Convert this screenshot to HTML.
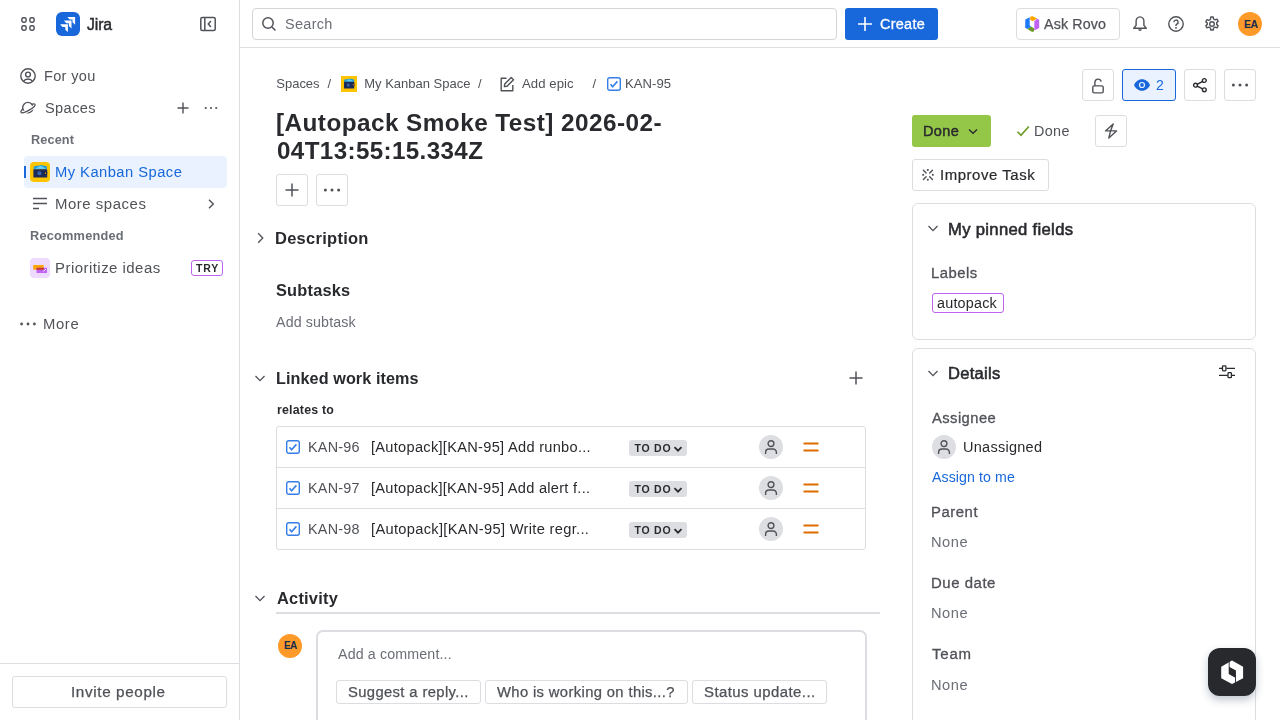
<!DOCTYPE html>
<html><head><meta charset="utf-8">
<style>
*{box-sizing:border-box;margin:0;padding:0}
html,body{width:1280px;height:720px;overflow:hidden;background:#fff}
body{-webkit-font-smoothing:antialiased;font-family:"Liberation Sans",sans-serif;color:#292a2e;font-size:14px;position:relative}
.a{position:absolute}
.t{position:absolute;white-space:nowrap;line-height:1;transform-origin:0 0}
svg{display:block;position:absolute;overflow:visible}
.b{position:absolute;border:1px solid #dcdde0;border-radius:3px;background:#fff}
</style></head><body>
<!-- SIDEBAR -->
<div class="a" style="left:239px;top:0;width:1px;height:720px;background:#dddee1"></div>
<svg style="left:20px;top:16px" width="16" height="16" viewBox="0 0 16 16"><g fill="none" stroke="#505258" stroke-width="1.5"><rect x="1.85" y="1.85" width="4.3" height="4.3" rx="1.6"/><rect x="9.85" y="1.85" width="4.3" height="4.3" rx="1.6"/><rect x="1.85" y="9.85" width="4.3" height="4.3" rx="1.6"/><rect x="9.85" y="9.85" width="4.3" height="4.3" rx="1.6"/></g></svg>
<div class="a" style="left:56px;top:12px;width:24px;height:24px;border-radius:6px;background:#1868db"></div>
<svg style="left:56px;top:12px" width="24" height="24" viewBox="0 0 24 24"><g fill="#fff"><path d="M11.3 4.9H19.1V12.7L16.5 10.3V7.5H13.7Z"/><path d="M7.9 8.6H15.5V16.4L12.9 14V11.2H10.3Z"/><path d="M4.1 12.3H11.9V20.1L9.3 17.7V14.9H6.5Z"/></g></svg>
<svg style="left:200px;top:16px" width="16" height="16" viewBox="0 0 16 16"><g fill="none" stroke="#505258" stroke-width="1.5"><rect x="0.8" y="1.5" width="14.4" height="13" rx="1.5"/><path d="M4.8 2v12"/><path d="M10.9 5.1 8.3 8l2.6 2.9"/></g></svg>

<svg style="left:20px;top:68px" width="16" height="16" viewBox="0 0 16 16"><g fill="none" stroke="#505258" stroke-width="1.4"><circle cx="8" cy="8" r="7.2"/><circle cx="8" cy="6.5" r="2.4"/><path d="M3.6 13.2c1-1.6 2.6-2.2 4.4-2.2s3.4.6 4.4 2.2"/></g></svg>
<svg style="left:20px;top:100px" width="16" height="16" viewBox="0 0 16 16"><g fill="none" stroke-width="1.4"><ellipse cx="8" cy="8.3" rx="8" ry="2.2" transform="rotate(-29 8 8.3)" stroke="#505258"/><circle cx="7.9" cy="7.6" r="5.2" fill="#fff" stroke="#505258"/><g transform="rotate(-29 8 8.3)"><path d="M0 8.3A8 2.2 0 0 0 16 8.3" stroke="#fff" stroke-width="3.2"/><path d="M0 8.3A8 2.2 0 0 0 16 8.3" stroke="#505258"/></g></g></svg>
<svg style="left:175px;top:100px" width="16" height="16" viewBox="0 0 16 16"><path d="M8 2.5v11M2.5 8h11" stroke="#505258" stroke-width="1.4"/></svg>
<svg style="left:203px;top:100px" width="16" height="16" viewBox="0 0 16 16"><g fill="#505258"><circle cx="2.8" cy="8" r="1.1"/><circle cx="8" cy="8" r="1.1"/><circle cx="13.2" cy="8" r="1.1"/></g></svg>

<div class="a" style="left:24px;top:156px;width:203px;height:32px;border-radius:4px;background:#e9f2fe"></div>
<div class="a" style="left:24px;top:166px;width:2px;height:12px;background:#1868db"></div>
<div class="a" style="left:30px;top:162px;width:20px;height:20px;border-radius:4px;background:#ffc400"></div>
<svg style="left:30px;top:162px" width="20" height="20" viewBox="0 0 20 20"><path d="M3.6 7.3 4 4.2 9.5 3.6 10.8 3 16.8 4.2 16.9 7.3z" fill="#1d9fd8"/><path d="M5 6.8 10.5 3.8 14 5.6 16 7z" fill="#6cd0f0"/><rect x="3.4" y="7.2" width="13.8" height="8.4" rx=".6" fill="#1c2b5a"/><rect x="13.3" y="9.4" width="3.9" height="3.7" rx=".8" fill="#14224a"/><circle cx="15.5" cy="11.3" r=".75" fill="#f5a623"/><circle cx="9.4" cy="11.2" r="2" fill="#3a67b0"/></svg>

<svg style="left:32px;top:196px" width="16" height="16" viewBox="0 0 16 16"><g stroke="#505258" stroke-width="1.4"><path d="M1 2.5h14M1 7.5h14M1 12.5h6"/></g></svg>
<svg style="left:203px;top:196px" width="16" height="16" viewBox="0 0 16 16"><path d="M6 3.8 10.3 8 6 12.2" fill="none" stroke="#505258" stroke-width="1.4"/></svg>

<div class="a" style="left:30px;top:258px;width:20px;height:20px;border-radius:4px;background:#eedafc"></div>
<svg style="left:30px;top:258px" width="20" height="20" viewBox="0 0 20 20"><rect x="3.2" y="6.9" width="10.5" height="4.9" rx=".5" fill="#fca700"/><rect x="6.5" y="9.8" width="10.5" height="5.1" rx=".5" fill="#bf63f3"/><rect x="6.5" y="9.8" width="7.2" height="2" fill="#c9372c"/><path d="M13.4 13.2 14.3 12.7 16 11" stroke="#fff" stroke-width=".9" fill="none"/></svg>
<div class="a" style="left:191px;top:260px;width:32px;height:16px;border:1px solid #bf63f3;border-radius:3px"></div>

<svg style="left:20px;top:316px" width="16" height="16" viewBox="0 0 16 16"><g fill="#505258"><circle cx="1.6" cy="8" r="1.4"/><circle cx="8" cy="8" r="1.4"/><circle cx="14.4" cy="8" r="1.4"/></g></svg>

<div class="a" style="left:0;top:663px;width:239px;height:1px;background:#dddee1"></div>
<div class="b" style="left:12px;top:676px;width:215px;height:32px"></div>

<!-- TOP BAR -->
<div class="a" style="left:240px;top:47px;width:1040px;height:1px;background:#dddee1"></div>
<div class="b" style="left:252px;top:8px;width:585px;height:32px;border-color:#d4d5d9;border-radius:4px"></div>
<svg style="left:261px;top:16px" width="16" height="16" viewBox="0 0 16 16"><g fill="none" stroke="#505258" stroke-width="1.5"><circle cx="7" cy="7" r="5.2"/><path d="M11 11l3.5 3.5"/></g></svg>
<div class="a" style="left:845px;top:8px;width:93px;height:32px;border-radius:3px;background:#1868db"></div>
<svg style="left:857px;top:16px" width="16" height="16" viewBox="0 0 16 16"><path d="M8 1v14M1 8h14" stroke="#fff" stroke-width="1.6"/></svg>
<div class="b" style="left:1016px;top:8px;width:104px;height:32px;border-radius:4px"></div>
<svg style="left:1024px;top:16px" width="16" height="16" viewBox="0 0 16 16"><path d="M1.3 3.6 5.7 1.2V9.6L7.4 10.7 3.3 13.1 1.2 11.8z" fill="#1d7afc"/><path d="M6.1 0.9 8.1 0 13.1 2.5 8.8 5.2 6.1 3.7z" fill="#fca700"/><path d="M13.1 2.6 15.2 3.9V11.9L10.3 14.6V5.4z" fill="#bf63f3"/><path d="M3.3 13.1 7.4 10.7 10 12.3V15.2L8.2 16.1z" fill="#6a9a23"/></svg>
<svg style="left:1132px;top:16px" width="16" height="16" viewBox="0 0 16 16"><path d="M8 0.9C5.6 0.9 4.1 2.8 4.1 5.3V9.4L1.7 12.2H14.3L11.9 9.4V5.3C11.9 2.8 10.4 0.9 8 0.9Z" fill="none" stroke="#505258" stroke-width="1.4" stroke-linejoin="round"/><path d="M6.2 13.2A1.8 1.8 0 0 0 9.8 13.2Z" fill="#505258"/></svg>
<svg style="left:1168px;top:16px" width="16" height="16" viewBox="0 0 16 16"><g fill="none" stroke="#505258" stroke-width="1.4"><circle cx="8" cy="8" r="7.2"/><path d="M5.9 6.2a2.1 2.1 0 1 1 2.9 1.9c-.5.2-.8.6-.8 1.1v.8"/></g><circle cx="8" cy="11.9" r=".9" fill="#505258"/></svg>
<svg style="left:1204px;top:16px" width="16" height="16" viewBox="0 0 16 16"><g fill="none" stroke="#505258" stroke-width="1.4" stroke-linejoin="round"><circle cx="8" cy="8" r="2.3"/><path d="M6.8 1h2.4l.4 2 1.5.9 1.9-.7 1.2 2.1-1.5 1.3v1.8l1.5 1.3-1.2 2.1-1.9-.7-1.5.9-.4 2H6.8l-.4-2-1.5-.9-1.9.7-1.2-2.1 1.5-1.3V7.1L1.8 5.8l1.2-2.1 1.9.7 1.5-.9z"/></g></svg>
<div class="a" style="left:1238px;top:12px;width:24px;height:24px;border-radius:50%;background:#fd9a2a"></div>
<div class="t" style="left:1244px;top:18.8px;font-size:10.5px;font-weight:700;color:#172b4d;letter-spacing:-0.5px">EA</div>

<!-- BREADCRUMB ICONS -->
<div class="a" style="left:341px;top:76px;width:16px;height:16px;background:#ffc400"></div>
<svg style="left:341px;top:76px" width="16" height="16" viewBox="0 0 16 16"><path d="M3.1 5.9 3.3 3.5 7.6 3.1 8.6 2.6 13.1 3.5 13.2 5.9z" fill="#1d9fd8"/><path d="M4.2 5.5 8.4 3.3 11 4.6 12.6 5.6z" fill="#6cd0f0"/><rect x="3" y="5.8" width="10.2" height="6.7" rx=".5" fill="#1c2b5a"/><rect x="10.7" y="7.3" width="2.8" height="2.8" rx=".6" fill="#14224a"/><circle cx="12.2" cy="8.7" r=".6" fill="#f5a623"/><circle cx="7.3" cy="9.1" r="1.5" fill="#3a67b0"/></svg>
<svg style="left:499px;top:76px" width="16" height="16" viewBox="0 0 16 16"><g fill="none" stroke="#505258" stroke-width="1.4" stroke-linejoin="round"><path d="M7.5 2.2H2.2v12.6h11.6V9"/><path d="M12.2 1.5 14.5 3.8 8 10.3 5.4 10.6 5.7 8z"/></g></svg>
<svg style="left:606px;top:76px" width="16" height="16" viewBox="0 0 16 16"><rect x="1.7" y="1.7" width="12.6" height="12.6" rx="2" fill="none" stroke="#357de8" stroke-width="1.4"/><path d="M4.5 8.3 6.6 10.8 11.4 5.4" fill="none" stroke="#357de8" stroke-width="1.6" stroke-linejoin="round"/></svg>

<!-- TITLE BUTTONS -->
<div class="b" style="left:276px;top:174px;width:32px;height:32px"></div>
<svg style="left:284px;top:182px" width="16" height="16" viewBox="0 0 16 16"><path d="M8 1.5v13M1.5 8h13" stroke="#505258" stroke-width="1.5"/></svg>
<div class="b" style="left:316px;top:174px;width:32px;height:32px"></div>
<svg style="left:324px;top:182px" width="16" height="16" viewBox="0 0 16 16"><g fill="#505258"><circle cx="1.4" cy="8" r="1.5"/><circle cx="8" cy="8" r="1.5"/><circle cx="14.6" cy="8" r="1.5"/></g></svg>

<!-- SECTION CHEVRONS -->
<svg style="left:252px;top:230px" width="16" height="16" viewBox="0 0 16 16"><path d="M6.2 3.2 10.8 8 6.2 12.8" fill="none" stroke="#505258" stroke-width="1.3"/></svg>
<svg style="left:252px;top:370px" width="16" height="16" viewBox="0 0 16 16"><path d="M3.5 6 8 10.6 12.5 6" fill="none" stroke="#505258" stroke-width="1.3"/></svg>
<svg style="left:848px;top:370px" width="16" height="16" viewBox="0 0 16 16"><path d="M8 1.5v13M1.5 8h13" stroke="#505258" stroke-width="1.5"/></svg>

<!-- LINKED TABLE -->
<div class="a" style="left:276px;top:426px;width:590px;height:124px;border:1px solid #dcdde0;border-radius:3px"></div>
<div class="a" style="left:277px;top:467px;width:588px;height:1px;background:#dcdde0"></div>
<div class="a" style="left:277px;top:508px;width:588px;height:1px;background:#dcdde0"></div>
<svg style="left:285px;top:439px" width="16" height="16" viewBox="0 0 16 16"><rect x="1.7" y="1.7" width="12.6" height="12.6" rx="2" fill="none" stroke="#357de8" stroke-width="1.4"/><path d="M4.5 8.3 6.6 10.8 11.4 5.4" fill="none" stroke="#357de8" stroke-width="1.6" stroke-linejoin="round"/></svg>
<div class="a" style="left:629px;top:440px;width:58px;height:16px;border-radius:3px;background:#dddee1"></div>
<svg style="left:672.5px;top:444px" width="10" height="10" viewBox="0 0 10 10"><path d="M1.5 3.2 5 6.7 8.5 3.2" fill="none" stroke="#292a2e" stroke-width="1.8"/></svg>
<div class="a" style="left:759px;top:435px;width:24px;height:24px;border-radius:50%;background:#dddee1"></div>
<svg style="left:763px;top:439px" width="16" height="16" viewBox="0 0 16 16"><g fill="none" stroke="#505258" stroke-width="1.4"><circle cx="8" cy="4.6" r="2.9"/><path d="M2.6 15v-1.6a3.4 3.4 0 0 1 3.4-3.4h4a3.4 3.4 0 0 1 3.4 3.4V15"/></g></svg>
<svg style="left:803px;top:439px" width="16" height="16" viewBox="0 0 16 16"><path d="M0.5 4.5h15M0.5 11.5h15" stroke="#e06c00" stroke-width="1.8"/></svg>
<svg style="left:285px;top:480px" width="16" height="16" viewBox="0 0 16 16"><rect x="1.7" y="1.7" width="12.6" height="12.6" rx="2" fill="none" stroke="#357de8" stroke-width="1.4"/><path d="M4.5 8.3 6.6 10.8 11.4 5.4" fill="none" stroke="#357de8" stroke-width="1.6" stroke-linejoin="round"/></svg>
<div class="a" style="left:629px;top:481px;width:58px;height:16px;border-radius:3px;background:#dddee1"></div>
<svg style="left:672.5px;top:485px" width="10" height="10" viewBox="0 0 10 10"><path d="M1.5 3.2 5 6.7 8.5 3.2" fill="none" stroke="#292a2e" stroke-width="1.8"/></svg>
<div class="a" style="left:759px;top:476px;width:24px;height:24px;border-radius:50%;background:#dddee1"></div>
<svg style="left:763px;top:480px" width="16" height="16" viewBox="0 0 16 16"><g fill="none" stroke="#505258" stroke-width="1.4"><circle cx="8" cy="4.6" r="2.9"/><path d="M2.6 15v-1.6a3.4 3.4 0 0 1 3.4-3.4h4a3.4 3.4 0 0 1 3.4 3.4V15"/></g></svg>
<svg style="left:803px;top:480px" width="16" height="16" viewBox="0 0 16 16"><path d="M0.5 4.5h15M0.5 11.5h15" stroke="#e06c00" stroke-width="1.8"/></svg>
<svg style="left:285px;top:521px" width="16" height="16" viewBox="0 0 16 16"><rect x="1.7" y="1.7" width="12.6" height="12.6" rx="2" fill="none" stroke="#357de8" stroke-width="1.4"/><path d="M4.5 8.3 6.6 10.8 11.4 5.4" fill="none" stroke="#357de8" stroke-width="1.6" stroke-linejoin="round"/></svg>
<div class="a" style="left:629px;top:522px;width:58px;height:16px;border-radius:3px;background:#dddee1"></div>
<svg style="left:672.5px;top:526px" width="10" height="10" viewBox="0 0 10 10"><path d="M1.5 3.2 5 6.7 8.5 3.2" fill="none" stroke="#292a2e" stroke-width="1.8"/></svg>
<div class="a" style="left:759px;top:517px;width:24px;height:24px;border-radius:50%;background:#dddee1"></div>
<svg style="left:763px;top:521px" width="16" height="16" viewBox="0 0 16 16"><g fill="none" stroke="#505258" stroke-width="1.4"><circle cx="8" cy="4.6" r="2.9"/><path d="M2.6 15v-1.6a3.4 3.4 0 0 1 3.4-3.4h4a3.4 3.4 0 0 1 3.4 3.4V15"/></g></svg>
<svg style="left:803px;top:521px" width="16" height="16" viewBox="0 0 16 16"><path d="M0.5 4.5h15M0.5 11.5h15" stroke="#e06c00" stroke-width="1.8"/></svg>

<!-- ACTIVITY -->
<svg style="left:252px;top:590px" width="16" height="16" viewBox="0 0 16 16"><path d="M3.5 6 8 10.6 12.5 6" fill="none" stroke="#505258" stroke-width="1.3"/></svg>
<div class="a" style="left:276px;top:612px;width:604px;height:2px;background:#dcdde0"></div>
<div class="a" style="left:278px;top:634px;width:24px;height:24px;border-radius:50%;background:#fd9a2a"></div>
<div class="t" style="left:283.9px;top:641.3px;font-size:10px;font-weight:700;color:#172b4d;letter-spacing:-0.5px">EA</div>
<div class="a" style="left:316px;top:630px;width:551px;height:110px;border:2px solid #dcdde0;border-radius:7px"></div>
<div class="b" style="left:336px;top:680px;width:145px;height:24px;border-radius:3px"></div>
<div class="b" style="left:485px;top:680px;width:203px;height:24px;border-radius:3px"></div>
<div class="b" style="left:692px;top:680px;width:135px;height:24px;border-radius:3px"></div>

<!-- RIGHT TOP BUTTONS -->
<div class="b" style="left:1082px;top:69px;width:32px;height:32px"></div>
<svg style="left:1090px;top:77px" width="16" height="16" viewBox="0 0 16 16"><g fill="none" stroke="#505258" stroke-width="1.4"><rect x="2.8" y="8.9" width="10.4" height="7" rx="1.4"/><path d="M4.9 8.9V5A3.2 3.2 0 0 1 11.2 4.6"/></g></svg>
<div class="a" style="left:1122px;top:69px;width:54px;height:32px;border:1px solid #1868db;border-radius:3px;background:#e9f2fe"></div>
<svg style="left:1134px;top:77px" width="16" height="16" viewBox="0 0 16 16"><path d="M8 2.2C4.3 2.2 1.3 4.8 0 8c1.3 3.2 4.3 5.8 8 5.8s6.7-2.6 8-5.8C14.7 4.8 11.7 2.2 8 2.2z" fill="#1868db"/><circle cx="8" cy="8" r="3.1" fill="#e9f2fe"/><circle cx="8" cy="8" r="1.9" fill="#1868db"/></svg>
<div class="b" style="left:1184px;top:69px;width:32px;height:32px"></div>
<svg style="left:1192px;top:77px" width="16" height="16" viewBox="0 0 16 16"><g fill="none" stroke="#292a2e" stroke-width="1.4"><circle cx="3.5" cy="8.2" r="1.9"/><circle cx="12.3" cy="3.5" r="1.9"/><circle cx="12.3" cy="12.8" r="1.9"/><path d="M5.2 7.3 10.6 4.4M5.2 9.1 10.6 11.9"/></g></svg>
<div class="b" style="left:1224px;top:69px;width:32px;height:32px"></div>
<svg style="left:1232px;top:77px" width="16" height="16" viewBox="0 0 16 16"><g fill="#505258"><circle cx="1.4" cy="8" r="1.5"/><circle cx="8" cy="8" r="1.5"/><circle cx="14.6" cy="8" r="1.5"/></g></svg>

<!-- STATUS -->
<div class="a" style="left:912px;top:115px;width:79px;height:32px;border-radius:3px;background:#94c748"></div>
<svg style="left:965px;top:123px" width="16" height="16" viewBox="0 0 16 16"><path d="M4 6.5 8 10.3 12 6.5" fill="none" stroke="#292a2e" stroke-width="1.4"/></svg>
<svg style="left:1015px;top:123px" width="16" height="16" viewBox="0 0 16 16"><path d="M2.5 8.8 6 12.3 13.8 3.5" fill="none" stroke="#6a9a23" stroke-width="1.6"/></svg>
<div class="b" style="left:1095px;top:115px;width:32px;height:32px"></div>
<svg style="left:1103px;top:123px" width="16" height="16" viewBox="0 0 16 16"><path d="M10.2 0.9 2.5 7.9H13.5L5.8 15.1 7.5 7.9Z" fill="none" stroke="#505258" stroke-width="1.4" stroke-linejoin="round"/></svg>
<div class="b" style="left:912px;top:159px;width:137px;height:32px"></div>
<svg style="left:920px;top:167px" width="16" height="16" viewBox="0 0 16 16"><g stroke="#505258" stroke-width="1.4" stroke-linecap="round"><path d="M3.4 3.3 6.1 6M12.4 3.3 9.7 6M3.4 12.4 6.1 9.7M12.4 12.4 9.7 9.7"/></g><g fill="#505258"><rect x="6.9" y="2.1" width="1.8" height="1.8"/><rect x="6.9" y="11.8" width="1.8" height="1.8"/><rect x="2.3" y="6.9" width="1.8" height="1.8"/><rect x="11.9" y="6.9" width="1.8" height="1.8"/></g></svg>

<!-- PINNED PANEL -->
<div class="a" style="left:912px;top:203px;width:344px;height:137px;border:1px solid #dcdde0;border-radius:6px"></div>
<svg style="left:925px;top:220px" width="16" height="16" viewBox="0 0 16 16"><path d="M3.5 6 8 10.6 12.5 6" fill="none" stroke="#505258" stroke-width="1.3"/></svg>
<div class="a" style="left:932px;top:293px;width:72px;height:20px;border:1px solid #bf63f3;border-radius:3px"></div>

<!-- DETAILS PANEL -->
<div class="a" style="left:912px;top:348px;width:344px;height:400px;border:1px solid #dcdde0;border-radius:6px"></div>
<svg style="left:925px;top:365px" width="16" height="16" viewBox="0 0 16 16"><path d="M3.5 6 8 10.6 12.5 6" fill="none" stroke="#505258" stroke-width="1.3"/></svg>
<svg style="left:1219px;top:364px" width="16" height="16" viewBox="0 0 16 16"><g fill="none" stroke="#292a2e" stroke-width="1.3"><path d="M0 4.3h3M7.4 4.3H16M0 11.3h8.6M13 11.3H16"/><rect x="3.5" y="1.8" width="3.4" height="5" rx=".8"/><rect x="9" y="8.7" width="3.4" height="5" rx=".8"/></g></svg>
<div class="a" style="left:932px;top:435px;width:24px;height:24px;border-radius:50%;background:#dddee1"></div>
<svg style="left:936px;top:439px" width="16" height="16" viewBox="0 0 16 16"><g fill="none" stroke="#505258" stroke-width="1.4"><circle cx="8" cy="4.6" r="2.9"/><path d="M2.6 15v-1.6a3.4 3.4 0 0 1 3.4-3.4h4a3.4 3.4 0 0 1 3.4 3.4V15"/></g></svg>

<!-- ROVO FAB -->
<div class="a" style="left:1208px;top:648px;width:48px;height:48px;border-radius:12px;background:#28292d;box-shadow:0 4px 8px rgba(9,30,66,.25)"></div>
<svg style="left:1220px;top:660px" width="24" height="24" viewBox="0 0 24 24"><path d="M12 0.4 23.1 6.7V18.2L12 24 1.2 18.2V6.7z" fill="#fff"/><path d="M8.7 1.6 9.6 1.1V7.2L15.9 10.6V22.8L15 23.3V17.6L8.7 14.1z" fill="#28292d"/><path d="M9.2 7 15.4 10.4V17.6L9.2 13.8z" fill="#28292d"/></svg>

<div style="position:absolute;left:0;top:0;width:1280px;height:720px;will-change:transform">
<div class="t" id="t0" style="left:87.08px;top:17.00px;font-size:16px;color:#292a2e;letter-spacing:-0.106px;transform:scaleX(0.9879);-webkit-text-stroke:0.45px #292a2e;">Jira</div>
<div class="t" id="t1" style="left:43.56px;top:68.81px;font-size:14px;color:#505258;letter-spacing:0.304px;transform:scaleX(1.0400);">For you</div>
<div class="t" id="t2" style="left:44.60px;top:100.91px;font-size:14px;color:#505258;letter-spacing:0.383px;transform:scaleX(1.0410);">Spaces</div>
<div class="t" id="t3" style="left:30.50px;top:134.26px;font-size:12.5px;color:#6b6e76;font-weight:700;letter-spacing:0.122px;transform:scaleX(1.0144);">Recent</div>
<div class="t" id="t4" style="left:55.15px;top:165.21px;font-size:14px;color:#1868db;letter-spacing:0.431px;transform:scaleX(1.0531);">My Kanban Space</div>
<div class="t" id="t5" style="left:55.13px;top:197.41px;font-size:14px;color:#505258;letter-spacing:0.516px;transform:scaleX(1.0652);">More spaces</div>
<div class="t" id="t6" style="left:30.40px;top:229.81px;font-size:12.5px;color:#6b6e76;font-weight:700;letter-spacing:0.194px;transform:scaleX(1.0218);">Recommended</div>
<div class="t" id="t7" style="left:55.13px;top:261.31px;font-size:14px;color:#505258;letter-spacing:0.428px;transform:scaleX(1.0707);">Prioritize ideas</div>
<div class="t" id="t8" style="left:195.90px;top:263.20px;font-size:10.5px;color:#292a2e;font-weight:700;letter-spacing:0.897px;">TRY</div>
<div class="t" id="t9" style="left:43.34px;top:316.71px;font-size:14px;color:#505258;letter-spacing:0.598px;transform:scaleX(1.0576);">More</div>
<div class="t" id="t10" style="left:71.27px;top:684.82px;font-size:14px;color:#505258;letter-spacing:0.584px;transform:scaleX(1.0889);-webkit-text-stroke:0.25px #505258;">Invite people</div>
<div class="t" id="t11" style="left:285.00px;top:17.01px;font-size:14px;color:#6b6e76;letter-spacing:0.288px;transform:scaleX(1.0331);">Search</div>
<div class="t" id="t12" style="left:879.75px;top:17.01px;font-size:14px;color:#ffffff;letter-spacing:0.272px;transform:scaleX(1.0320);-webkit-text-stroke:0.3px #ffffff;">Create</div>
<div class="t" id="t13" style="left:1044.37px;top:17.26px;font-size:14px;color:#505258;letter-spacing:0.151px;transform:scaleX(1.0175);-webkit-text-stroke:0.25px #505258;">Ask Rovo</div>
<div class="t" id="t14" style="left:276.30px;top:77.00px;font-size:13px;color:#505258;letter-spacing:-0.016px;">Spaces</div>
<div class="t" id="t15" style="left:327.50px;top:77.00px;font-size:13px;color:#505258;">/</div>
<div class="t" id="t16" style="left:364.30px;top:77.00px;font-size:13px;color:#505258;letter-spacing:-0.011px;">My Kanban Space</div>
<div class="t" id="t17" style="left:478.00px;top:77.00px;font-size:13px;color:#505258;">/</div>
<div class="t" id="t18" style="left:521.60px;top:77.00px;font-size:13px;color:#505258;letter-spacing:0.072px;transform:scaleX(1.0098);">Add epic</div>
<div class="t" id="t19" style="left:592.60px;top:77.00px;font-size:13px;color:#505258;">/</div>
<div class="t" id="t20" style="left:625.19px;top:77.00px;font-size:13px;color:#505258;letter-spacing:0.061px;transform:scaleX(1.0069);">KAN-95</div>
<div class="t" id="t21" style="left:276.37px;top:112.31px;font-size:23.5px;color:#292a2e;font-weight:700;letter-spacing:0.431px;transform:scaleX(1.0349);">[Autopack Smoke Test] 2026-02-</div>
<div class="t" id="t22" style="left:277.40px;top:140.10px;font-size:23.5px;color:#292a2e;font-weight:700;letter-spacing:0.371px;transform:scaleX(1.0287);">04T13:55:15.334Z</div>
<div class="t" id="t23" style="left:275.37px;top:231.00px;font-size:16px;color:#292a2e;font-weight:700;letter-spacing:0.264px;transform:scaleX(1.0306);">Description</div>
<div class="t" id="t24" style="left:276.00px;top:283.00px;font-size:16px;color:#292a2e;font-weight:700;letter-spacing:0.216px;transform:scaleX(1.0212);">Subtasks</div>
<div class="t" id="t25" style="left:276.00px;top:314.61px;font-size:14px;color:#6b6e76;letter-spacing:0.131px;transform:scaleX(1.0168);">Add subtask</div>
<div class="t" id="t26" style="left:275.69px;top:371.20px;font-size:16px;color:#292a2e;font-weight:700;letter-spacing:0.090px;transform:scaleX(1.0104);">Linked work items</div>
<div class="t" id="t27" style="left:276.70px;top:404.20px;font-size:12px;color:#292a2e;font-weight:700;letter-spacing:0.195px;transform:scaleX(1.0332);">relates to</div>
<div class="t" id="t28" style="left:308.17px;top:439.71px;font-size:14px;color:#505258;letter-spacing:0.253px;transform:scaleX(1.0263);">KAN-96</div>
<div class="t" id="t29" style="left:371.46px;top:439.71px;font-size:14px;color:#292a2e;letter-spacing:0.282px;transform:scaleX(1.0420);">[Autopack][KAN-95] Add runbo...</div>
<div class="t" id="t30" style="left:634.40px;top:443.10px;font-size:10.5px;color:#292a2e;font-weight:700;letter-spacing:0.777px;">TO DO</div>
<div class="t" id="t31" style="left:308.17px;top:480.61px;font-size:14px;color:#505258;letter-spacing:0.253px;transform:scaleX(1.0263);">KAN-97</div>
<div class="t" id="t32" style="left:371.46px;top:480.61px;font-size:14px;color:#292a2e;letter-spacing:0.267px;transform:scaleX(1.0427);">[Autopack][KAN-95] Add alert f...</div>
<div class="t" id="t33" style="left:634.40px;top:484.00px;font-size:10.5px;color:#292a2e;font-weight:700;letter-spacing:0.777px;">TO DO</div>
<div class="t" id="t34" style="left:308.17px;top:521.51px;font-size:14px;color:#505258;letter-spacing:0.253px;transform:scaleX(1.0263);">KAN-98</div>
<div class="t" id="t35" style="left:371.45px;top:521.51px;font-size:14px;color:#292a2e;letter-spacing:0.297px;transform:scaleX(1.0468);">[Autopack][KAN-95] Write regr...</div>
<div class="t" id="t36" style="left:634.40px;top:524.90px;font-size:10.5px;color:#292a2e;font-weight:700;letter-spacing:0.777px;">TO DO</div>
<div class="t" id="t37" style="left:277.00px;top:591.40px;font-size:16px;color:#292a2e;font-weight:700;letter-spacing:0.212px;transform:scaleX(1.0256);">Activity</div>
<div class="t" id="t38" style="left:338.30px;top:646.71px;font-size:14px;color:#6b6e76;letter-spacing:0.128px;transform:scaleX(1.0176);">Add a comment...</div>
<div class="t" id="t39" style="left:348.47px;top:684.81px;font-size:14px;color:#505258;letter-spacing:0.353px;transform:scaleX(1.0559);-webkit-text-stroke:0.25px #505258;">Suggest a reply...</div>
<div class="t" id="t40" style="left:497.37px;top:684.81px;font-size:14px;color:#505258;letter-spacing:0.351px;transform:scaleX(1.0548);-webkit-text-stroke:0.25px #505258;">Who is working on this...?</div>
<div class="t" id="t41" style="left:704.37px;top:684.81px;font-size:14px;color:#505258;letter-spacing:0.422px;transform:scaleX(1.0650);-webkit-text-stroke:0.25px #505258;">Status update...</div>
<div class="t" id="t42" style="left:1156.00px;top:77.71px;font-size:14px;color:#1868db;">2</div>
<div class="t" id="t43" style="left:923.13px;top:123.91px;font-size:14px;color:#292a2e;letter-spacing:0.372px;transform:scaleX(1.0337);-webkit-text-stroke:0.45px #292a2e;">Done</div>
<div class="t" id="t44" style="left:1034.27px;top:123.91px;font-size:14px;color:#505258;letter-spacing:0.331px;transform:scaleX(1.0304);">Done</div>
<div class="t" id="t45" style="left:939.83px;top:167.91px;font-size:14px;color:#292a2e;letter-spacing:0.517px;transform:scaleX(1.0681);-webkit-text-stroke:0.2px #292a2e;">Improve Task</div>
<div class="t" id="t46" style="left:947.87px;top:221.50px;font-size:16px;color:#292a2e;letter-spacing:0.307px;transform:scaleX(1.0399);-webkit-text-stroke:0.55px #292a2e;">My pinned fields</div>
<div class="t" id="t47" style="left:931.28px;top:265.81px;font-size:14px;color:#505258;letter-spacing:0.480px;transform:scaleX(1.0592);-webkit-text-stroke:0.3px #505258;">Labels</div>
<div class="t" id="t48" style="left:937.30px;top:295.81px;font-size:14px;color:#292a2e;letter-spacing:0.210px;transform:scaleX(1.0254);">autopack</div>
<div class="t" id="t49" style="left:947.68px;top:365.75px;font-size:16px;color:#292a2e;letter-spacing:0.274px;transform:scaleX(1.0339);-webkit-text-stroke:0.55px #292a2e;">Details</div>
<div class="t" id="t50" style="left:931.84px;top:410.71px;font-size:14px;color:#505258;letter-spacing:0.428px;transform:scaleX(1.0515);-webkit-text-stroke:0.3px #505258;">Assignee</div>
<div class="t" id="t51" style="left:963.37px;top:439.71px;font-size:14px;color:#292a2e;letter-spacing:0.270px;transform:scaleX(1.0337);">Unassigned</div>
<div class="t" id="t52" style="left:932.00px;top:469.91px;font-size:14px;color:#1868db;letter-spacing:0.084px;transform:scaleX(1.0114);">Assign to me</div>
<div class="t" id="t53" style="left:930.58px;top:505.01px;font-size:14px;color:#505258;letter-spacing:0.508px;transform:scaleX(1.0625);-webkit-text-stroke:0.3px #505258;">Parent</div>
<div class="t" id="t54" style="left:930.75px;top:535.01px;font-size:14px;color:#6b6e76;letter-spacing:0.508px;transform:scaleX(1.0466);">None</div>
<div class="t" id="t55" style="left:930.58px;top:576.01px;font-size:14px;color:#505258;letter-spacing:0.523px;transform:scaleX(1.0650);-webkit-text-stroke:0.3px #505258;">Due date</div>
<div class="t" id="t56" style="left:930.75px;top:606.01px;font-size:14px;color:#6b6e76;letter-spacing:0.508px;transform:scaleX(1.0466);">None</div>
<div class="t" id="t57" style="left:932.34px;top:647.01px;font-size:14px;color:#505258;letter-spacing:0.778px;transform:scaleX(1.0689);-webkit-text-stroke:0.3px #505258;">Team</div>
<div class="t" id="t58" style="left:930.75px;top:678.21px;font-size:14px;color:#6b6e76;letter-spacing:0.508px;transform:scaleX(1.0466);">None</div>
</div>
</body></html>
